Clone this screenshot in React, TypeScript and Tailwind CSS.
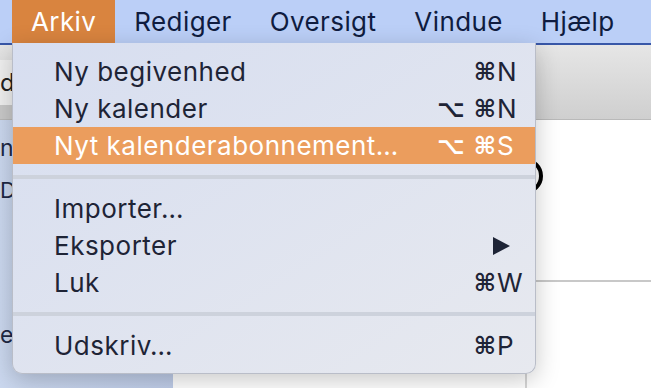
import React from 'react';

type Item =
    | { kind: 'item'; label: string; mods?: string[]; keyChar?: string; submenu?: boolean; active?: boolean }
    | { kind: 'sep' };

const menuTitles = ['Arkiv', 'Rediger', 'Oversigt', 'Vindue', 'Hjælp'];

const items: Item[] = [
    { kind: 'item', label: 'Ny begivenhed', mods: ['⌘'], keyChar: 'N' },
    { kind: 'item', label: 'Ny kalender', mods: ['⌥', '⌘'], keyChar: 'N' },
    { kind: 'item', label: 'Nyt kalenderabonnement…', mods: ['⌥', '⌘'], keyChar: 'S', active: true },
    { kind: 'sep' },
    { kind: 'item', label: 'Importer…' },
    { kind: 'item', label: 'Eksporter', submenu: true },
    { kind: 'item', label: 'Luk', mods: ['⌘'], keyChar: 'W' },
    { kind: 'sep' },
    { kind: 'item', label: 'Udskriv…', mods: ['⌘'], keyChar: 'P' },
];

const font = { fontFamily: '"Inter", "DejaVu Sans", sans-serif' };

const MenuRow: React.FC<{ item: Extract<Item, { kind: 'item' }> }> = ({ item }) => (
    <div
        className={`flex items-center h-[37px] pl-[41px] pr-[12px] text-[26px] ${
            item.active ? 'bg-[#eb9d5d] text-white' : 'text-[#1e2436]'
        }`}
    >
        <span className="flex-1 whitespace-nowrap tracking-[0.5px]">{item.label}</span>
        {item.submenu ? (
            <svg width="17" height="18" viewBox="0 0 17 18" className="mr-[13px]">
                <polygon points="0,0 17,9 0,18" fill="#1e2436" />
            </svg>
        ) : item.keyChar ? (
            <div className="flex items-center">
                <div className="flex gap-[9px] justify-end">
                    {item.mods?.map((m, i) => (
                        <span
                            key={i}
                            className="text-[24px] leading-none font-bold"
                            style={{ fontFamily: '"DejaVu Sans", sans-serif' }}
                        >
                            {m}
                        </span>
                    ))}
                </div>
                <span className="w-[27px] pl-[1px] leading-none">{item.keyChar}</span>
            </div>
        ) : null}
    </div>
);

export default function App() {
    return (
        <div className="relative w-[651px] h-[388px] overflow-hidden bg-white" style={font}>
            {/* menu bar */}
            <div className="flex h-[45px] bg-[#bbcff7] border-b-2 border-[#3857a8] text-[26px] text-[#0f1c40] tracking-[0.4px]">
                <div className="w-[12px]" />
                {menuTitles.map((t, i) => (
                    <div
                        key={t}
                        className={`flex items-center px-[19px] h-[43px] ${i === 0 ? 'bg-[#d9843f] text-white' : ''}`}
                    >
                        {t}
                    </div>
                ))}
            </div>

            {/* app window behind the menu */}
            <div className="h-[75px] bg-linear-to-b from-[#e6e6e6] to-[#cfcfcf] border-b border-[#b9b9b9] flex flex-col">
                <div className="h-[15px]" />
                <div className="h-[45px] w-[120px] bg-[#f0f0f0] text-[24px] text-[#222] flex items-center">
                    <span>dag</span>
                </div>
                <div className="h-[14px] w-[120px] bg-[#c9c9c9]" />
            </div>
            <div className="flex h-[268px]">
                <div className="w-[173px] bg-linear-to-r from-[#cbd8ef] to-[#bfcde9] flex flex-col text-[#1d2845]">
                    <span className="mt-[11px] text-[23px]">navngivne</span>
                    <span className="mt-[8px] text-[22px]">Dage</span>
                    <span className="mt-[111px] text-[23px]">efter</span>
                </div>
                <div className="flex-1 flex flex-col">
                    <div className="h-[162px] flex border-b-2 border-[#c8c8c8]">
                        <div className="w-[354px] border-r border-[#d0d0d0] flex justify-end pt-[38px]">
                            <div className="w-[36px] h-[36px] rounded-full border-[4px] border-black -mr-[17px]" />
                        </div>
                        <div className="flex-1" />
                    </div>
                    <div className="flex-1 flex">
                        <div className="w-[354px] border-r-2 border-[#d6d6d6]" />
                        <div className="flex-1" />
                    </div>
                </div>
            </div>

            {/* dropdown menu */}
            <div className="absolute left-[12px] top-[43px] w-[524px] pt-[10px] pb-[9px] rounded-b-[10px] bg-linear-to-br from-[#d7def0] to-[#e7e9ef] border border-t-0 border-[#b9bdc8] shadow-[0_6px_24px_rgba(0,0,0,0.22)]">
                {items.map((item, i) =>
                    item.kind === 'sep' ? (
                        <div key={i} className="my-[11px] h-[4px] bg-[#cdd2dc]" />
                    ) : (
                        <MenuRow key={i} item={item} />
                    )
                )}
            </div>
        </div>
    );
}
